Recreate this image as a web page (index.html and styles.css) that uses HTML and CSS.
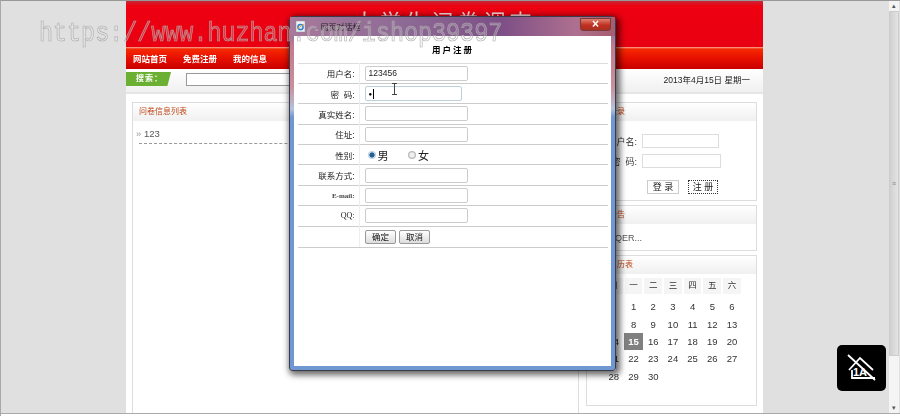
FILE: index.html
```html
<!DOCTYPE html>
<html>

<head>
    <meta charset="UTF-8">
    <title>问卷调查</title>
    <link rel="stylesheet" href="styles.css">
</head>

<body>
    <div class="screen">
        <div class="page">
            <div class="banner"><h1>大学生问卷调查</h1></div>
            <div class="nav">
                <a>网站首页</a>
                <a>免费注册</a>
                <a>我的信息</a>
            </div>
            <div class="searchbar">
                <span class="searchTag">搜索：</span>
                <input class="searchInput" type="text" />
                <span class="today">2013年4月15日 星期一</span>
            </div>
            <div class="content">
                <div class="mainCol">
                    <div class="boxHead">问卷信息列表</div>
                    <div class="listItem"><span class="mark">»</span> 123</div>
                </div>
                <div class="sideCol">
                    <div class="box boxLogin">
                        <div class="boxHead">用户登录</div>
                        <div class="loginRow">
                            <label>用户名:</label>
                            <input class="loginInput" type="text" />
                        </div>
                        <div class="loginRow">
                            <label>密&nbsp;&nbsp;码:</label>
                            <input class="loginInput loginInputWide" type="text" />
                        </div>
                        <div class="loginBtns">
                            <span class="loginBtn">登 录</span>
                            <span class="loginBtn loginBtnFocus">注 册</span>
                        </div>
                    </div>
                    <div class="box boxNotice">
                        <div class="boxHead">网站公告</div>
                        <p class="noticeText">QER...</p>
                    </div>
                    <div class="box boxCal">
                        <div class="boxHead">网站日历表</div>
                        <div class="cal">
                            <span class="calHead">日</span><span class="calHead">一</span><span class="calHead">二</span><span class="calHead">三</span><span class="calHead">四</span><span class="calHead">五</span><span class="calHead">六</span>
                            <span></span><span>1</span><span>2</span><span>3</span><span>4</span><span>5</span><span>6</span>
                            <span>7</span><span>8</span><span>9</span><span>10</span><span>11</span><span>12</span><span>13</span>
                            <span>14</span><span class="calToday">15</span><span>16</span><span>17</span><span>18</span><span>19</span><span>20</span>
                            <span>21</span><span>22</span><span>23</span><span>24</span><span>25</span><span>26</span><span>27</span>
                            <span>28</span><span>29</span><span>30</span>
                        </div>
                    </div>
                </div>
            </div>
        </div>
        <div class="scrollbar">
            <span class="scrollBtn">▴</span>
            <span class="scrollThumb"><i>≡</i></span>
            <span class="scrollRest"></span>
            <span class="scrollBtn">▾</span>
        </div>
    </div>
    <div class="statusLine"></div>

    <!-- 对话框 -->
    <div class="dialog">
        <div class="dialogBar">
            <svg class="dialogIcon" width="9" height="11" viewBox="0 0 9 11">
                <rect x="0" y="0" width="9" height="11" fill="#eef3f8" stroke="#8aa" stroke-width="0.6" />
                <circle cx="4.5" cy="6" r="2.6" fill="none" stroke="#2c7fd0" stroke-width="1.5" />
                <path d="M1 8 L8 3" stroke="#e0b030" stroke-width="1" />
            </svg>
            <span class="dialogTitle">-- 网页对话框</span>
            <span class="dialogClose">×</span>
        </div>
        <div class="dialogBody">
            <table class="regTable">
                <tr class="regTitleRow"><td colspan="2">用户注册</td></tr>
                <tr>
                    <td class="regLabel">用户名:</td>
                    <td><input class="regInput" type="text" value="123456" /></td>
                </tr>
                <tr>
                    <td class="regLabel">密&nbsp;&nbsp;码:</td>
                    <td><span class="regInput regPass"><b>●</b><i class="caret"></i></span></td>
                </tr>
                <tr>
                    <td class="regLabel">真实姓名:</td>
                    <td><input class="regInput" type="text" /></td>
                </tr>
                <tr>
                    <td class="regLabel">住址:</td>
                    <td><input class="regInput" type="text" /></td>
                </tr>
                <tr>
                    <td class="regLabel">性别:</td>
                    <td class="regSex">
                        <span class="radio radioOn"></span><span class="sexText">男</span>
                        <span class="radio radioOff"></span><span class="sexText">女</span>
                    </td>
                </tr>
                <tr>
                    <td class="regLabel">联系方式:</td>
                    <td><input class="regInput" type="text" /></td>
                </tr>
                <tr>
                    <td class="regLabel regLatin regMail">E-mail:</td>
                    <td><input class="regInput" type="text" /></td>
                </tr>
                <tr>
                    <td class="regLabel regLatin">QQ:</td>
                    <td><input class="regInput" type="text" /></td>
                </tr>
                <tr>
                    <td></td>
                    <td class="regBtns"><span class="regBtn">确定</span><span class="regBtn">取消</span></td>
                </tr>
            </table>
        </div>
    </div>

    <!-- 鼠标 -->
    <svg class="ibeam" width="7" height="12" viewBox="0 0 7 12">
        <path d="M1 .5 H6 M3.5 .5 V11.5 M1 11.5 H6" stroke="#444" stroke-width="1" fill="none" />
    </svg>

    <div class="watermark">https://www.huzhan.com/ishop39397</div>

    <div class="badge">
        <svg width="49" height="46" viewBox="0 0 49 46">
            <path d="M12 25 L23 13 L36 25 M15 25 V33 H38 M11 10 L38 35" stroke="#fff" stroke-width="1.8" fill="none" />
            <text class="badgeText" x="23" y="31" text-anchor="middle">1A</text>
        </svg>
    </div>
</body>

</html>
```

FILE: styles.css
```css
* {
    margin: 0;
    padding: 0;
    box-sizing: border-box;
}

html,
body {
    width: 900px;
    height: 416px;
    overflow: hidden;
}

body {
    background: #e0e0e0;
    font-family: "Liberation Sans", "Noto Sans CJK SC", sans-serif;
    font-size: 9px;
    color: #333;
    display: flex;
    flex-direction: column;
    border-top: 1px solid #999;
    border-left: 1px solid #a8a8a8;
}

.screen {
    display: flex;
    height: 412px;
}

.page {
    width: 637px;
    margin-left: 125px;
    margin-right: auto;
    background: #fff;
    display: flex;
    flex-direction: column;
    filter: blur(0.4px);
}

.statusLine {
    border-top: 1px solid #aaa;
    background: #fff;
    height: 3px;
}

/* 头部 */
.banner {
    height: 46px;
    background: linear-gradient(#c8283a 0, #ee0010 5px, #e80012 100%);
    text-align: center;
    overflow: hidden;
}

.banner h1 {
    font-size: 22px;
    font-weight: normal;
    letter-spacing: 4px;
    color: #f7dfe0;
    line-height: 34px;
    padding-top: 5px;
}

.nav {
    height: 22px;
    display: flex;
    align-items: center;
    gap: 16px;
    padding: 0 0 0 7px;
    background: linear-gradient(#f8b0a0 0, #f52a00 2px, #e81000 50%, #c80000 100%);
}

.nav a {
    color: #fff;
    font-size: 8.5px;
    font-weight: bold;
}

.searchbar {
    height: 25px;
    display: flex;
    align-items: center;
    background: linear-gradient(#fff, #f0f0f0);
    border-bottom: 2px solid #e6e6e6;
    padding-bottom: 3px;
}

.searchTag {
    width: 45px;
    height: 14px;
    line-height: 14px;
    padding-left: 10px;
    background: #6cb033;
    color: #fff;
    font-weight: bold;
    font-size: 8px;
    letter-spacing: 1px;
    clip-path: polygon(0 0, 100% 0, 92% 100%, 0 100%);
}

.searchInput {
    width: 300px;
    height: 13px;
    margin-left: 15px;
    border: 1px solid #999;
    background: #fff;
}

.today {
    margin-left: auto;
    margin-right: 13px;
    font-size: 8.5px;
    color: #222;
}

/* 内容 */
.content {
    flex: 1;
    display: flex;
    gap: 7px;
    padding: 8px 5px 0 6px;
    min-height: 0;
}

.mainCol {
    width: 447px;
    border: 1px solid #ddd;
    border-bottom: none;
}

.sideCol {
    width: 171px;
    display: flex;
    flex-direction: column;
    gap: 4px;
}

.box {
    border: 1px solid #ddd;
}

.boxLogin {
    height: 99px;
}

.boxNotice {
    height: 46px;
}

.boxCal {
    height: 151px;
}

.boxHead {
    height: 18px;
    line-height: 18px;
    padding-left: 6px;
    font-size: 8px;
    color: #c0481a;
    background: linear-gradient(#fff, #f0f0f0);
}

.listItem {
    margin: 6px 0 0 6px;
    padding: 0 0 4px;
    height: 17px;
    line-height: 14px;
    font-size: 9.5px;
    color: #555;
    border-bottom: 1px dashed #999;
}

.mark {
    color: #999;
    margin-left: -3px;
}

.loginRow {
    display: flex;
    align-items: center;
    gap: 5px;
    height: 14px;
    margin-top: 6px;
}

.boxHead + .loginRow {
    margin-top: 13px;
}

.loginRow label {
    width: 50px;
    text-align: right;
    color: #333;
}

.loginInput {
    width: 77px;
    height: 14px;
    border: 1px solid #ddd;
    background: #fff;
}

.loginInputWide {
    width: 79px;
}

.loginBtns {
    display: flex;
    gap: 9px;
    margin: 12px 0 0 60px;
}

.loginBtn {
    width: 32px;
    height: 14px;
    line-height: 12px;
    text-align: center;
    border: 1px solid #ccc;
    color: #222;
}

.loginBtnFocus {
    width: 30px;
    border: 1px dotted #333;
}

.noticeText {
    padding: 9px 0 0 28px;
    color: #555;
    font-size: 9px;
}

.cal {
    display: grid;
    grid-template-columns: repeat(7, 19.7px);
    grid-template-rows: 20.4px;
    grid-auto-rows: 17.3px;
    margin: 4px 0 0 17px;
    font-size: 9.5px;
    color: #333;
    text-align: center;
    line-height: 17px;
}

.calHead {
    background: #f5f5f5;
    margin: 0 1px;
    height: 16px;
    line-height: 15px;
    font-size: 8.5px;
}

.calToday {
    background: #808080;
    color: #fff;
    font-weight: bold;
}

/* 滚动条 */
.scrollbar {
    width: 10px;
    margin-right: 1px;
    display: flex;
    flex-direction: column;
    color: #555;
    font-size: 7px;
    text-align: center;
}

.scrollBtn {
    height: 10px;
    line-height: 10px;
    background: #f4f4f4;
}

.scrollThumb {
    height: 345px;
    background: linear-gradient(90deg, #d0d0d0, #e4e4e4);
    border: 1px solid #ccc;
    display: flex;
    align-items: center;
    justify-content: center;
}

.scrollThumb i {
    font-style: normal;
    color: #888;
}

.scrollRest {
    flex: 1;
    background: #f4f4f4;
}

/* 对话框 */
.dialog {
    position: absolute;
    left: 289px;
    top: 16px;
    width: 327px;
    height: 355px;
    padding: 0 4px 4px;
    display: flex;
    flex-direction: column;
    border-radius: 5px 5px 3px 3px;
    background: linear-gradient(#9a6a90 0, #a5749a 20px, #c27c8e 30px, #c9909c 70px, #b4c2da 92px, #6f97d2 100px, #6f97d2 100%);
    border: 1px solid #3a3a4a;
    box-shadow: 2px 2px 6px 2px rgba(0, 0, 0, .6);
    filter: blur(0.3px);
}

.dialogBar {
    height: 19px;
    margin: 0 -4px;
    padding: 0 4px 0 6px;
    display: flex;
    align-items: center;
    background: linear-gradient(90deg, #a87a9c, #8d6a95 35%, #7d4f86 65%, #ae708f 88%, #a65c70);
}

.dialogIcon {
    flex: none;
}

.dialogTitle {
    margin-left: 8px;
    font-size: 8px;
    color: #222;
}

.dialogClose {
    margin-left: auto;
    width: 31px;
    height: 13px;
    margin-top: -5px;
    line-height: 11px;
    text-align: center;
    color: #fff;
    font-size: 12px;
    font-weight: bold;
    border: 1px solid #7a3a3a;
    border-radius: 0 0 3px 3px;
    background: linear-gradient(#e08070, #c03020 55%, #a83020);
}

.dialogBody {
    flex: 1;
    background: #fff;
    padding: 0 3px 0 4px;
}

.regTable {
    width: 310px;
    border-collapse: collapse;
    font-size: 8.5px;
    color: #222;
}

.regTable tr {
    height: 20.4px;
    border-bottom: 1px solid #ccc;
}

.regTable td + td {
    border-left: 1px solid #eee;
    padding-left: 5px;
}

.regTable .regTitleRow {
    height: 27px;
    border-bottom: 1px solid #ddd;
}

.regTitleRow td {
    text-align: center;
    font-weight: bold;
    letter-spacing: 2px;
    color: #000;
}

.regLabel {
    width: 61px;
    text-align: right;
    padding-right: 4px;
}

.regLatin {
    font-family: "Liberation Serif", serif;
    font-size: 8px;
}

.regMail {
    font-weight: bold;
    font-size: 7px;
    color: #444;
}

.regInput {
    display: block;
    width: 103px;
    height: 15px;
    padding-left: 3px;
    font-family: "Liberation Sans", sans-serif;
    font-size: 8.5px;
    color: #222;
    background: #fff;
    border: 1px solid #ccc;
    border-radius: 2px;
}

.regPass {
    width: 97px;
    display: flex;
    align-items: center;
    border-color: #bcd0dc;
}

.regPass b {
    font-size: 6px;
    color: #000;
}

.caret {
    width: 1px;
    height: 10px;
    margin-left: 1px;
    background: #000;
}

.regSex {
    white-space: nowrap;
}

.radio {
    display: inline-block;
    width: 8px;
    height: 8px;
    margin-left: 3px;
    border-radius: 50%;
    vertical-align: middle;
}

.radioOn {
    background: radial-gradient(circle, #235f90 0, #235f90 40%, #c0d4e4 50%);
}

.radioOff {
    margin-left: 17px;
    background: radial-gradient(circle, #f0f0f0 0, #f0f0f0 35%, #bbb 60%);
}

.sexText {
    font-size: 11px;
    margin-left: 2px;
    vertical-align: middle;
}

.regBtns {
    display: flex;
    gap: 3px;
    align-items: center;
    height: 20px;
}

.regBtn {
    width: 31px;
    height: 14px;
    line-height: 12px;
    text-align: center;
    border: 1px solid #999;
    border-radius: 2px;
    background: linear-gradient(#fff, #ddd);
    color: #111;
}

.ibeam {
    position: absolute;
    left: 391px;
    top: 83px;
}

/* 水印 */
.watermark {
    position: absolute;
    left: 39px;
    top: 17px;
    font-family: "Liberation Mono", monospace;
    font-size: 23.4px;
    line-height: 28px;
    white-space: nowrap;
    color: rgba(255, 255, 255, .2);
    -webkit-text-stroke: .6px rgba(170, 170, 170, .95);
    transform: scaleY(1.2);
    transform-origin: left top;
}

.badge {
    position: absolute;
    left: 837px;
    top: 345px;
    width: 49px;
    height: 46px;
    background: #000;
    border-radius: 5px;
}

.badge svg {
    display: block;
}

.badgeText {
    font-family: "Liberation Sans", sans-serif;
    font-size: 11px;
    font-weight: bold;
    fill: #fff;
}
```
